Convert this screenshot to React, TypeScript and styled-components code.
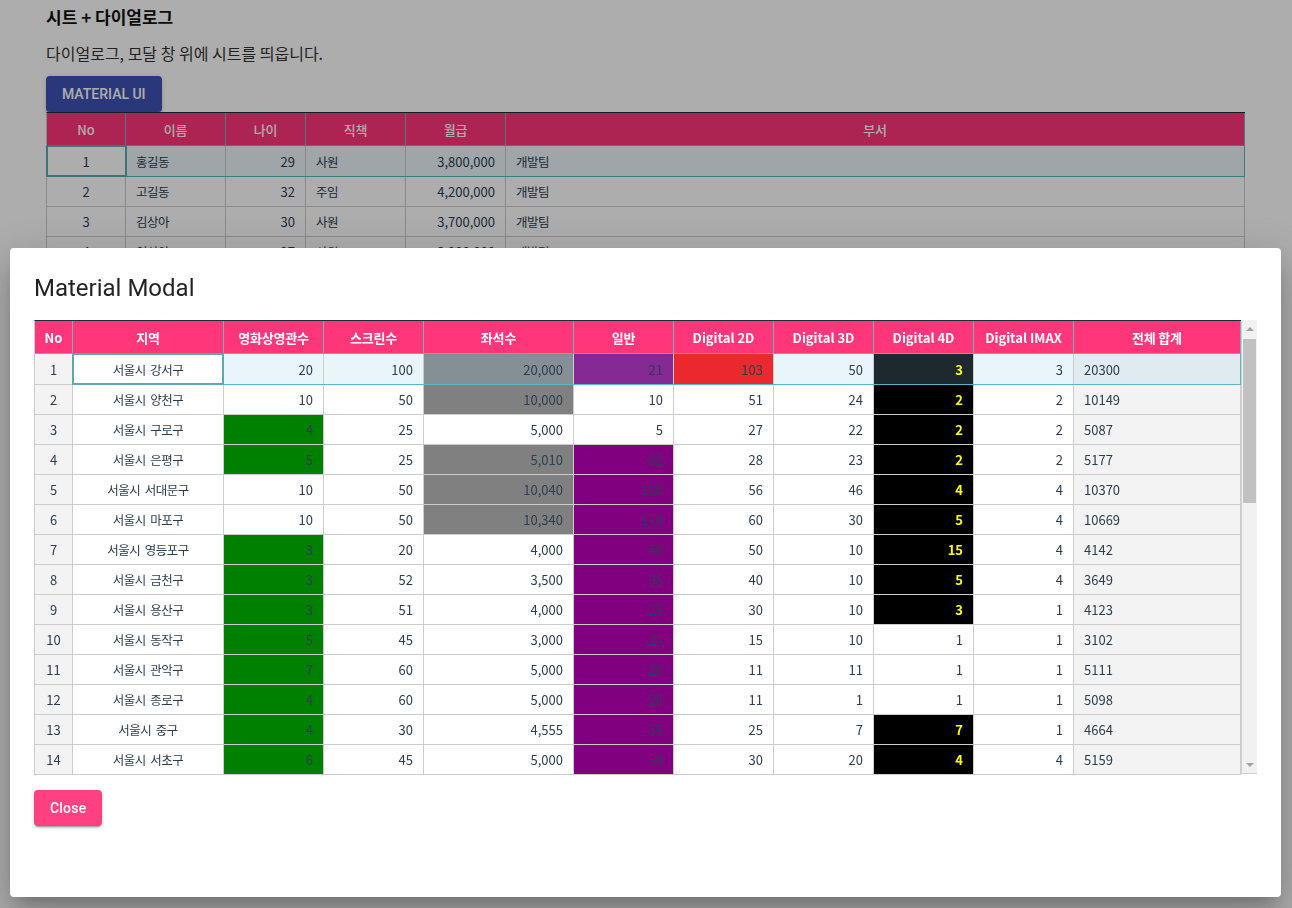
import React from "react";
import styled, { createGlobalStyle, css } from "styled-components";

const GlobalStyle = createGlobalStyle`
  html, body {
    margin: 0;
    padding: 0;
    height: 100%;
    overflow: hidden;
  }
  body {
    font-family: "Noto Sans CJK KR", "Noto Sans", sans-serif;
    background: #fff;
    color: #222;
  }
  * { box-sizing: border-box; }
`;

type Align = "left" | "center" | "right";

interface Col {
  title: string;
  w: number;
  align: Align;
  ko?: boolean;
  bg?: string;
}

const modalCols: Col[] = [
  { title: "No", w: 38, align: "center", bg: "#f3f3f3" },
  { title: "지역", w: 151, align: "center", ko: true },
  { title: "영화상영관수", w: 100, align: "right", ko: true },
  { title: "스크린수", w: 100, align: "right", ko: true },
  { title: "좌석수", w: 150, align: "right", ko: true },
  { title: "일반", w: 100, align: "right", ko: true },
  { title: "Digital 2D", w: 100, align: "right" },
  { title: "Digital 3D", w: 100, align: "right" },
  { title: "Digital 4D", w: 100, align: "right" },
  { title: "Digital IMAX", w: 100, align: "right" },
  { title: "전체 합계", w: 167, align: "left", ko: true, bg: "#f3f3f3" },
];

const rows: (string | number)[][] = [
  [1, "서울시 강서구", 20, 100, "20,000", 21, 103, 50, 3, 3, 20300],
  [2, "서울시 양천구", 10, 50, "10,000", 10, 51, 24, 2, 2, 10149],
  [3, "서울시 구로구", 4, 25, "5,000", 5, 27, 22, 2, 2, 5087],
  [4, "서울시 은평구", 5, 25, "5,010", 82, 28, 23, 2, 2, 5177],
  [5, "서울시 서대문구", 10, 50, "10,040", 160, 56, 46, 4, 4, 10370],
  [6, "서울시 마포구", 10, 50, "10,340", 170, 60, 30, 5, 4, 10669],
  [7, "서울시 영등포구", 3, 20, "4,000", 40, 50, 10, 15, 4, 4142],
  [8, "서울시 금천구", 3, 52, "3,500", 35, 40, 10, 5, 4, 3649],
  [9, "서울시 용산구", 3, 51, "4,000", 25, 30, 10, 3, 1, 4123],
  [10, "서울시 동작구", 5, 45, "3,000", 25, 15, 10, 1, 1, 3102],
  [11, "서울시 관악구", 7, 60, "5,000", 20, 11, 11, 1, 1, 5111],
  [12, "서울시 종로구", 4, 60, "5,000", 20, 11, 1, 1, 1, 5098],
  [13, "서울시 중구", 4, 30, "4,555", 35, 25, 7, 7, 1, 4664],
  [14, "서울시 서초구", 6, 45, "5,000", 50, 30, 20, 4, 4, 5159],
];

const grayRows = [1, 2, 4, 5, 6];
const greenRows = [3, 4, 7, 8, 9, 10, 11, 12, 13, 14];
const plainFourD = [10, 11, 12];

const bgCols: Col[] = [
  { title: "No", w: 79, align: "center" },
  { title: "이름", w: 100, align: "left", ko: true },
  { title: "나이", w: 80, align: "right", ko: true },
  { title: "직책", w: 100, align: "left", ko: true },
  { title: "월급", w: 100, align: "right", ko: true },
  { title: "부서", w: 739, align: "left", ko: true },
];

// only the first rows show above the dialog; the rest are hidden behind it
const bgRows: (string | number)[][] = [
  [1, "홍길동", 29, "사원", "3,800,000", "개발팀"],
  [2, "고길동", 32, "주임", "4,200,000", "개발팀"],
  [3, "김상아", 30, "사원", "3,700,000", "개발팀"],
  [4, "이상아", 27, "사원", "3,900,000", "개발팀"],
  ...Array.from({ length: 20 }, () => ["", "", "", "", "", ""]),
];

function colTemplate(cols: Col[]) {
  return cols.map((c) => `${c.w}px`).join(" ");
}

/* ---------- background page ---------- */

const Page = styled.div`
  padding: 4px 0 0 46px;
  height: 908px;
  overflow: hidden;
`;

const PageTitle = styled.h2`
  margin: 0;
  font-size: 17px;
  line-height: 26px;
  font-weight: 700;
  color: #111;
`;

const PageDesc = styled.p`
  margin: 11px 0 0;
  font-size: 16px;
  line-height: 24px;
  color: #333;
`;

const PrimaryButton = styled.button`
  display: block;
  margin-top: 11px;
  height: 36px;
  padding: 0 16px;
  border: none;
  border-radius: 4px;
  background: #3f51b5;
  color: #fff;
  font-family: Roboto, "Noto Sans", sans-serif;
  font-weight: 500;
  font-size: 14px;
  letter-spacing: 0;
  text-transform: uppercase;
  box-shadow: 0 3px 1px -2px rgba(0, 0, 0, 0.2), 0 2px 2px 0 rgba(0, 0, 0, 0.14),
    0 1px 5px 0 rgba(0, 0, 0, 0.12);
`;

/* ---------- sheet grid ---------- */

const Sheet = styled.div<{ $w?: number }>`
  width: ${(p) => (p.$w ? `${p.$w}px` : "auto")};
  border-left: 1px solid #ccc;
  border-top: 1px solid #1e2a38;
`;

const GridRow = styled.div<{ $cols: string; $h: number }>`
  position: relative;
  display: grid;
  grid-template-columns: ${(p) => p.$cols};
  height: ${(p) => p.$h}px;
`;

const HeadCell = styled.div<{ $ko?: boolean; $weight?: number }>`
  display: flex;
  align-items: center;
  justify-content: center;
  background: #ff3679;
  color: #fff;
  font-weight: ${(p) => p.$weight ?? 700};
  font-size: 13px;
  letter-spacing: ${(p) => (p.$ko ? "-0.2px" : "0")};
  border-right: 1px solid #6fb3b8;
  border-bottom: 1px solid #6fb3b8;
  white-space: nowrap;
  overflow: hidden;
`;

const justify = { left: "flex-start", center: "center", right: "flex-end" };

const Cell = styled.div<{
  $align: Align;
  $bg?: string;
  $ko?: boolean;
  $tint?: boolean;
  $bold?: boolean;
  $color?: string;
}>`
  display: flex;
  align-items: center;
  justify-content: ${(p) => justify[p.$align]};
  padding: 0 10px;
  border-right: 1px solid #ccc;
  border-bottom: 1px solid #ccc;
  background-color: ${(p) => p.$bg || "#fff"};
  ${(p) =>
    p.$tint &&
    css`
      background-image: linear-gradient(rgba(150, 202, 230, 0.2), rgba(150, 202, 230, 0.2));
    `}
  font-size: ${(p) => (p.$ko ? "12.5px" : "13px")};
  letter-spacing: ${(p) => (p.$ko ? "-0.5px" : "0")};
  word-spacing: ${(p) => (p.$ko ? "2px" : "0")};
  font-weight: ${(p) => (p.$bold ? 700 : 400)};
  color: ${(p) => p.$color || "#2c3e50"};
  white-space: nowrap;
  overflow: hidden;
`;

const SelectionBox = styled.div<{ $left: number }>`
  position: absolute;
  left: ${(p) => p.$left}px;
  right: 0;
  top: -1px;
  bottom: 0;
  border: 1px solid #5ab7bf;
  pointer-events: none;
`;

const ActiveBox = styled.div<{ $left: number; $w: number }>`
  position: absolute;
  left: ${(p) => p.$left}px;
  width: ${(p) => p.$w}px;
  top: -1px;
  bottom: 0;
  border: 2px solid #5fa8ae;
  pointer-events: none;
`;

/* ---------- overlay + modal ---------- */

const Backdrop = styled.div`
  position: fixed;
  inset: 0;
  background: rgba(0, 0, 0, 0.32);
  z-index: 10;
`;

const Dialog = styled.div`
  position: fixed;
  top: 248px;
  left: 10px;
  width: 1271px;
  height: 649px;
  padding: 24px;
  background: #fff;
  border-radius: 4px;
  z-index: 11;
  box-shadow: 0 11px 15px -7px rgba(0, 0, 0, 0.2), 0 24px 38px 3px rgba(0, 0, 0, 0.14),
    0 9px 46px 8px rgba(0, 0, 0, 0.12);
`;

const DialogTitle = styled.h2`
  margin: 0 0 16px;
  font-family: Roboto, "Noto Sans", sans-serif;
  font-weight: 400;
  font-size: 24px;
  line-height: 32px;
  color: rgba(0, 0, 0, 0.87);
`;

const SheetFrame = styled.div`
  display: flex;
  align-items: flex-start;
`;

const Scrollbar = styled.div`
  display: flex;
  flex-direction: column;
  width: 16px;
  height: 454px;
  background: #f1f1f1;
  border-left: 1px solid #d0d0d8;
  border-bottom: 1px solid #ccc;
`;

const ScrollArrow = styled.div<{ $down?: boolean }>`
  height: 17px;
  display: flex;
  align-items: center;
  justify-content: center;
  &::after {
    content: "";
    border-left: 4px solid transparent;
    border-right: 4px solid transparent;
    ${(p) =>
      p.$down
        ? css`border-top: 4px solid #a3a3a3;`
        : css`border-bottom: 4px solid #a3a3a3;`}
  }
`;

const ScrollThumb = styled.div`
  margin: 2px 0 0 1px;
  width: 13px;
  height: 164px;
  background: #c1c1c1;
`;

const ScrollSpacer = styled.div`
  flex: 1;
`;

const CloseButton = styled(PrimaryButton)`
  margin-top: 15px;
  padding: 0 16px;
  background: #ff4081;
  text-transform: none;
  letter-spacing: 0.2px;
`;

function ModalSheet() {
  const cols = colTemplate(modalCols);
  return (
    <SheetFrame>
      <Sheet>
        <GridRow $cols={cols} $h={33}>
          {modalCols.map((c) => (
            <HeadCell key={c.title} $ko={c.ko}>
              {c.title}
            </HeadCell>
          ))}
        </GridRow>
        {rows.map((r) => {
          const n = r[0] as number;
          const selected = n === 1;
          return (
            <GridRow key={n} $cols={cols} $h={selected ? 31 : 30}>
              {r.map((v, ci) => {
                const col = modalCols[ci];
                let bg = col.bg;
                let color: string | undefined;
                let bold = false;
                if (ci === 2 && greenRows.includes(n)) bg = "#008000";
                if (ci === 4 && grayRows.includes(n)) bg = "#808080";
                if (ci === 5 && n !== 2 && n !== 3) bg = "#800080";
                if (ci === 6 && n === 1) bg = "#ff0000";
                if (ci === 8 && !plainFourD.includes(n)) {
                  bg = "#000";
                  color = "#ffff00";
                  bold = true;
                }
                return (
                  <Cell
                    key={ci}
                    $align={col.align}
                    $ko={ci === 1}
                    $bg={bg}
                    $color={color}
                    $bold={bold}
                    $tint={selected && ci > 1}
                  >
                    {v}
                  </Cell>
                );
              })}
              {selected && (
                <>
                  <SelectionBox $left={37} />
                  <ActiveBox $left={37} $w={152} />
                </>
              )}
            </GridRow>
          );
        })}
      </Sheet>
      <Scrollbar>
        <ScrollArrow />
        <ScrollThumb />
        <ScrollSpacer />
        <ScrollArrow $down />
      </Scrollbar>
    </SheetFrame>
  );
}

function BackgroundSheet() {
  const cols = colTemplate(bgCols);
  return (
    <Sheet $w={1199}>
      <GridRow $cols={cols} $h={33}>
        {bgCols.map((c) => (
          <HeadCell key={c.title} $ko={c.ko} $weight={500}>
            {c.title}
          </HeadCell>
        ))}
      </GridRow>
      {bgRows.map((r, ri) => {
        const selected = ri === 0;
        return (
          <GridRow key={ri} $cols={cols} $h={selected ? 31 : 30}>
            {r.map((v, ci) => (
              <Cell
                key={ci}
                $align={bgCols[ci].align}
                $ko={ci === 1 || ci === 3 || ci === 5}
                $tint={selected && ci > 0}
              >
                {v}
              </Cell>
            ))}
            {selected && (
              <>
                <SelectionBox $left={-1} />
                <ActiveBox $left={-1} $w={81} />
              </>
            )}
          </GridRow>
        );
      })}
    </Sheet>
  );
}

export default function App() {
  return (
    <>
      <GlobalStyle />
      <Page>
        <PageTitle>시트 + 다이얼로그</PageTitle>
        <PageDesc>다이얼로그, 모달 창 위에 시트를 띄웁니다.</PageDesc>
        <PrimaryButton>Material UI</PrimaryButton>
        <BackgroundSheet />
      </Page>
      <Backdrop />
      <Dialog>
        <DialogTitle>Material Modal</DialogTitle>
        <ModalSheet />
        <CloseButton>Close</CloseButton>
      </Dialog>
    </>
  );
}
